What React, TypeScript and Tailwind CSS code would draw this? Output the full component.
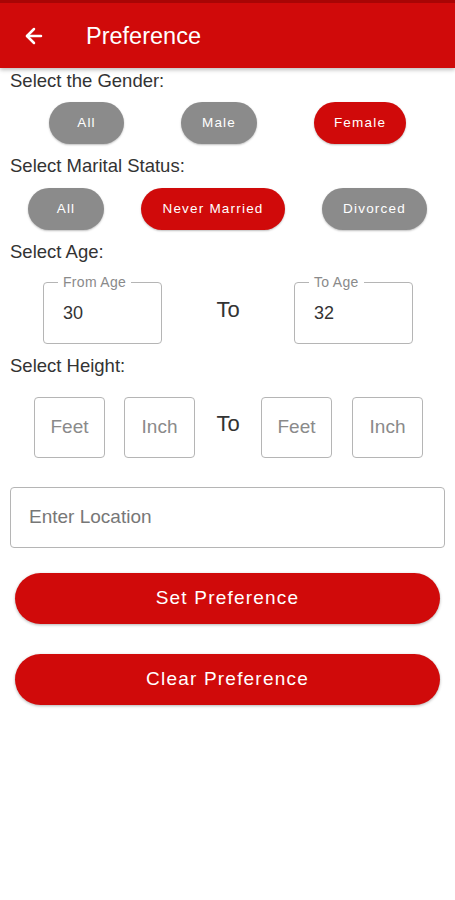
import React from 'react';
import { ArrowLeft } from 'lucide-react';

const RED = 'bg-[#d00a0a]';

const Pill = ({ label, active, width }: { label: string; active?: boolean; width: string }) => (
  <div
    className={`${width} h-[42px] rounded-full flex items-center justify-center text-[13.5px] tracking-[1.2px] text-white shadow-[0_1px_2px_rgba(0,0,0,0.25)] ${
      active ? RED : 'bg-[#8b8b8b]'
    }`}
  >
    {label}
  </div>
);

const Label = ({ text, className }: { text: string; className: string }) => (
  <div className={`pl-[10px] text-[18.5px] leading-[20px] text-[#333] ${className}`}>{text}</div>
);

const AgeBox = ({ label, value }: { label: string; value: string }) => (
  <div className="relative w-[119px] h-[62px] border border-[#b5b5b5] rounded-[4px] flex items-center pl-[19px] pt-[1px]">
    <span className="absolute -top-[8px] left-[14px] bg-white px-[5px] text-[14px] tracking-[0.3px] leading-[15px] text-[#8a8a8a]">
      {label}
    </span>
    <span className="text-[18px] text-[#333]">{value}</span>
  </div>
);

const HeightBox = ({ text }: { text: string }) => (
  <div className="w-[71px] h-[61px] border border-[#b5b5b5] rounded-[4px] flex items-center justify-center text-[19px] text-[#8a8a8a]">
    {text}
  </div>
);

const App = () => {
  return (
    <div className="min-h-[900px] bg-white font-['Liberation_Sans',Arial,sans-serif]">
      {/* Header */}
      <div className={`h-[68px] ${RED} border-t-[3px] border-[#a80505] flex items-center shadow-[0_2px_4px_rgba(0,0,0,0.25)]`}>
        <ArrowLeft className="ml-[22px] text-white" size={24} strokeWidth={2.5} />
        <span className="ml-[40px] pt-[3px] text-[23.5px] text-white">Preference</span>
      </div>

      <Label text="Select the Gender:" className="mt-[3px]" />
      <div className="flex pl-[49px] gap-[57px] mt-[11px]">
        <Pill label="All" width="w-[75px]" />
        <Pill label="Male" width="w-[76px]" />
        <Pill label="Female" width="w-[92px]" active />
      </div>

      <Label text="Select Marital Status:" className="mt-[12px]" />
      <div className="flex pl-[28px] gap-[37px] mt-[12px]">
        <Pill label="All" width="w-[76px]" />
        <Pill label="Never Married" width="w-[144px]" active />
        <Pill label="Divorced" width="w-[105px]" />
      </div>

      <Label text="Select Age:" className="mt-[12px]" />
      <div className="flex items-center pl-[43px] mt-[20px]">
        <AgeBox label="From Age" value="30" />
        <span className="w-[132px] text-center text-[22px] text-[#333] -mt-[7px]">To</span>
        <AgeBox label="To Age" value="32" />
      </div>

      <Label text="Select Height:" className="mt-[12px]" />
      <div className="flex items-center pl-[34px] mt-[21px]">
        <HeightBox text="Feet" />
        <div className="ml-[19px]">
          <HeightBox text="Inch" />
        </div>
        <span className="w-[66px] text-center text-[22px] text-[#333] -mt-[8px]">To</span>
        <HeightBox text="Feet" />
        <div className="ml-[20px]">
          <HeightBox text="Inch" />
        </div>
      </div>

      <div className="mx-[10px] mt-[29px] h-[61px] border border-[#b5b5b5] rounded-[4px] flex items-center pl-[18px] text-[19px] text-[#777]">
        Enter Location
      </div>

      <div className="px-[15px] mt-[25px] flex flex-col gap-[30px]">
        <button className={`h-[51px] w-full rounded-full ${RED} text-white text-[19px] tracking-[1.2px] shadow-[0_1px_3px_rgba(0,0,0,0.3)]`}>
          Set Preference
        </button>
        <button className={`h-[51px] w-full rounded-full ${RED} text-white text-[19px] tracking-[1.2px] shadow-[0_1px_3px_rgba(0,0,0,0.3)]`}>
          Clear Preference
        </button>
      </div>
    </div>
  );
};

export default App;
